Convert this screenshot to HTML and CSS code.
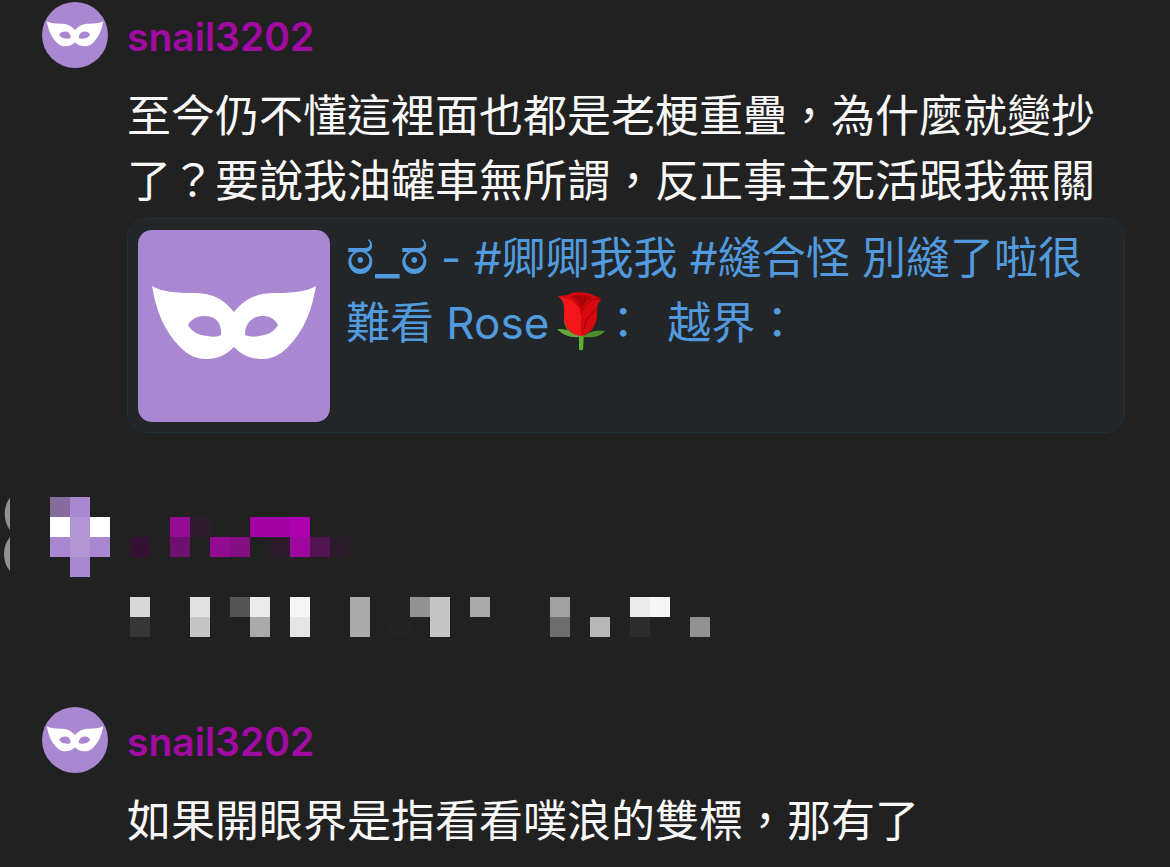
FILE: index.html
```
<!DOCTYPE html>
<html lang="zh-Hant">
<head>
    <meta charset="UTF-8">
    <meta name="viewport" content="width=device-width, initial-scale=1.0">
    <title>snail3202</title>
    <link rel="stylesheet" href="styles.css">
</head>
<body>
    <!-- Mask drawing shared by the avatars and the link thumbnail -->
    <svg class="defs" aria-hidden="true">
        <symbol id="mask" viewBox="0 0 192 192">
            <path fill="#fff" fill-rule="evenodd" d="M14 56C24 62 38 63 55 63C76 63 86 70 96 82C106 70 116 63 137 63C154 63 168 62 178 56C174 80 166 101 150 117C141 126 133 129 124 129C112 129 104 125 96 117C88 125 80 129 68 129C59 129 51 126 42 117C26 101 18 80 14 56ZM50 95C54 88 60 86 67 86C77 86 84 92 83 105C80 107 75 107 69 106C60 105 54 102 50 95ZM140 95C136 88 131 86 125 86C115 86 107 92 107 105C112 107 117 107 121 106C130 105 136 102 140 95Z"/>
        </symbol>
    </svg>

    <main class="thread">
        <article class="message">
            <svg class="avatar" aria-hidden="true"><use href="#mask"/></svg>
            <div class="message-body">
                <h2 class="name">snail3202</h2>
                <p class="text">至今仍不懂這裡面也都是老梗重疊，為什麼就變抄了？要說我油罐車無所謂，反正事主死活跟我無關</p>
                <a class="card" href="#">
                    <svg class="thumb" aria-hidden="true"><use href="#mask"/></svg>
                    <span class="card-title"><span class="face">ಠ_ಠ</span> - #卿卿我我 #縫合怪 別縫了啦很難看 Rose<svg class="rose" viewBox="2 0 48 60" role="img" aria-label="玫瑰">
                        <path fill="#5fae2c" d="M24 42h5l-1 17h-4z"/>
                        <path fill="#3f8f2b" d="M9 28C9 38 15 44 25 46C20 38 16 34 9 28Z"/>
                        <path fill="#67a83a" d="M2 38C9 38 18 39 25 46C15 47 8 44 2 38Z"/>
                        <path fill="#4b8f2c" d="M50 40C42 39 34 40 27 46C37 47 45 46 50 40Z"/>
                        <path fill="#d9070e" d="M3 5C9 5 14 4 17 2C25 0 36 2 40 5L46 7C46 10 42 12 42 17C43 29 40 41 27 45C15 44 9 36 9 25C10 16 9 9 3 5Z"/>
                        <path fill="#f3171c" d="M3 5C14 8 25 12 26 24C27 33 24 39 27 45C15 44 9 36 9 25C10 16 9 9 3 5Z"/>
                        <path fill="#b5050c" d="M15 6C20 3 33 3 38 7C33 8 29 13 26 18C24 12 20 8 15 6Z"/>
                        <path fill="none" stroke="#8e0309" d="M46 7C35 8 29 14 26 22M41 17C37 25 31 25 29 38M20 5C25 6 28 10 28 15M31 4C29 6 29 9 30 11"/>
                    </svg>：&ensp;越界：</span>
                </a>
            </div>
        </article>

        <!-- Censored reply, 20px cells -->
        <svg class="censored" viewBox="0 0 720 140" shape-rendering="crispEdges" aria-hidden="true">
            <g fill="#919191" shape-rendering="auto">
                <path d="M10 1C3 9 3 24 10 33Z"/>
                <path d="M10 40C2 49 2 65 10 74Z"/>
            </g>
            <path fill="#866b9f" d="M50 0h20v20h-20z"/>
            <path fill="#aa87d1" d="M70 0h20v20h-20zM50 40h20v20h-20zM90 40h20v20h-20zM70 60h20v20h-20z"/>
            <path fill="#b195d4" d="M70 20h20v40h-20z"/>
            <path fill="#fff" d="M50 20h20v20h-20zM90 20h20v20h-20z"/>
            <path fill="#341133" d="M130 40h20v20h-20z"/>
            <path fill="#950c96" d="M170 20h20v20h-20z"/>
            <path fill="#6d106e" d="M170 40h20v20h-20z"/>
            <path fill="#2d1c2d" d="M190 20h20v20h-20z"/>
            <path fill="#920b92" d="M210 40h20v20h-20z"/>
            <path fill="#840f84" d="M230 40h20v20h-20z"/>
            <path fill="#a303a6" d="M250 20h40v20h-40z"/>
            <path fill="#ae00b1" d="M290 20h20v20h-20z"/>
            <path fill="#2a1a2a" d="M270 40h20v20h-20zM330 40h20v20h-20z"/>
            <path fill="#9f089f" d="M290 40h20v20h-20z"/>
            <path fill="#531452" d="M310 40h20v20h-20z"/>

            <path fill="#d8d8d8" d="M130 100h20v20h-20z"/>
            <path fill="#363636" d="M130 120h20v20h-20z"/>
            <path fill="#e1e1e1" d="M190 100h20v20h-20z"/>
            <path fill="#c5c5c5" d="M190 120h20v20h-20zM430 100h20v40h-20z"/>
            <path fill="#545454" d="M230 100h20v20h-20z"/>
            <path fill="#ebebeb" d="M250 100h20v20h-20zM630 100h20v20h-20z"/>
            <path fill="#aaa" d="M250 120h20v20h-20zM350 100h20v40h-20zM470 100h20v20h-20z"/>
            <path fill="#f5f5f5" d="M290 100h20v20h-20zM650 100h20v20h-20z"/>
            <path fill="#e5e5e5" d="M290 120h20v20h-20z"/>
            <path fill="#232323" d="M390 120h20v20h-20z"/>
            <path fill="#929292" d="M410 100h20v20h-20zM690 120h20v20h-20z"/>
            <path fill="#a2a2a2" d="M550 100h20v20h-20z"/>
            <path fill="#6e6e6e" d="M550 120h20v20h-20z"/>
            <path fill="#b8b8b8" d="M590 120h20v20h-20z"/>
            <path fill="#2c2c2c" d="M630 120h20v20h-20z"/>
        </svg>

        <article class="message">
            <svg class="avatar" aria-hidden="true"><use href="#mask"/></svg>
            <div class="message-body">
                <h2 class="name">snail3202</h2>
                <p class="text">如果開眼界是指看看噗浪的雙標，那有了</p>
            </div>
        </article>
    </main>
</body>
</html>
```
FILE: styles.css
```
* {
    box-sizing: border-box;
}

body {
    margin: 0;
    background-color: #212121;
    color: #f8f8f8;
    font-family: Inter, "Noto Sans CJK TC", sans-serif;
    font-size: 44px;
    line-height: 65px;
}

.defs {
    position: absolute;
    width: 0;
    height: 0;
}

.thread {
    padding-top: 2px;
}

.message {
    display: flex;
    align-items: flex-start;
    gap: 19px;
    padding: 0 45px 0 42px;
}

.avatar {
    flex: none;
    width: 66px;
    height: 66px;
    border-radius: 50%;
    background-color: #aa87d1;
}

.message-body {
    flex: 1;
    min-width: 0;
}

.name {
    margin: 0 0 12px;
    color: #a10aa3;
    font-size: 39px;
    font-weight: 600;
    line-height: 70px;
}

.text {
    margin: 0;
}

/* Link preview */
.card {
    display: flex;
    align-items: flex-start;
    gap: 16px;
    margin-top: 4px;
    padding: 11px 10px 10px;
    border: 1px solid #22303a;
    border-radius: 20px;
    background-color: #222629;
    color: #529ade;
    text-decoration: none;
}

.thumb {
    flex: none;
    width: 192px;
    height: 192px;
    border-radius: 14px;
    background-color: #aa87d1;
}

.card-title {
    flex: 1;
    min-width: 0;
    margin-top: -4px;
}

.face {
    font-size: 54px;
    line-height: 1;
}

.rose {
    width: 48px;
    height: 60px;
    margin: 0 -4px 0 8px;
    vertical-align: -12px;
}

.censored {
    display: block;
    width: 720px;
    height: 140px;
    margin: 64px 0 70px;
}
```
